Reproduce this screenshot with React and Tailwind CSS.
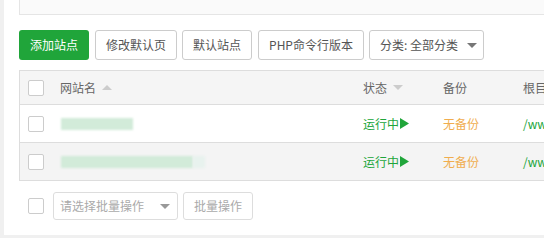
import React from "react";

const font = { fontFamily: '"Noto Sans CJK SC", "Microsoft YaHei", sans-serif' };

function Box() {
  return <div className="w-[16px] h-[16px] border border-[#ccc] rounded-[2px] bg-white" />;
}

function Tri({ up, color = "#ccc", w = 10, h = 5 }) {
  return (
    <svg width={w} height={h} viewBox="0 0 10 5" className="inline-block">
      {up ? <path d="M0 5 L5 0 L10 5 Z" fill={color} /> : <path d="M0 0 L10 0 L5 5 Z" fill={color} />}
    </svg>
  );
}

function Running() {
  return (
    <span className="flex items-center text-[#20a53a]">
      运行中
      <svg width="9" height="11" viewBox="0 0 9 11" className="ml-[1px]">
        <path d="M0 0 L9 5.5 L0 11 Z" fill="#20a53a" />
      </svg>
    </span>
  );
}

function Row({ bg, nameW, extra }) {
  return (
    <div className={`flex h-[38px] border-b border-[#ddd] items-center ${bg}`}>
      <div className="w-[32px] pl-[8px] flex items-center">
        <Box />
      </div>
      <div className="w-[303px] pl-[9px] flex items-center">
        <div className={`h-[12px] ${nameW} bg-[#d2ebd9] blur-[1px]`} />
        {extra && <div className="h-[12px] w-[12px] bg-[#e8f2ee] blur-[1px]" />}
      </div>
      <div className="w-[80px] pl-[8px]"><Running /></div>
      <div className="w-[80px] pl-[8px] text-[#f0ad4e]">无备份</div>
      <div className="pl-[8px] text-[#20a53a] whitespace-nowrap">/www/wwwroot</div>
    </div>
  );
}

export default function App() {
  return (
    <div className="w-[544px] h-[238px] bg-[#f0f0f0] overflow-hidden pl-[4px] text-[12px]" style={font}>
      <div className="h-[235px] bg-white pl-[15px] overflow-hidden">
        <div className="h-[15px] border-l border-b border-[#e5e5e5] bg-[#fafafa]" />
        <div className="flex mt-[15px] h-[30px] gap-[5px] whitespace-nowrap">
          <div className="w-[70px] flex items-center justify-center bg-[#20a53a] text-white rounded-[3px]">添加站点</div>
          <div className="w-[82px] flex items-center justify-center border border-[#ccc] text-[#555] rounded-[3px] ml-[1px]">修改默认页</div>
          <div className="w-[70px] flex items-center justify-center border border-[#ccc] text-[#555] rounded-[3px]">默认站点</div>
          <div className="w-[106px] flex items-center justify-center border border-[#ccc] text-[#555] rounded-[3px] ml-[1px]">PHP命令行版本</div>
          <div className="w-[115px] flex items-center border border-[#ccc] text-[#555] rounded-[3px] pl-[10px] pr-[6px] justify-between">
            <span>分类: 全部分类</span>
            <Tri color="#777" />
          </div>
        </div>
        <div className="mt-[10px] border-l border-t border-[#ddd] w-[600px]">
          <div className="flex h-[34px] bg-[#f5f5f5] border-b border-[#ddd] items-center text-[#666]">
            <div className="w-[32px] pl-[8px] flex items-center"><Box /></div>
            <div className="w-[303px] pl-[8px] flex items-center gap-[6px]">
              <span>网站名</span>
              <Tri up />
            </div>
            <div className="w-[80px] pl-[8px] flex items-center gap-[6px]">
              <span>状态</span>
              <Tri />
            </div>
            <div className="w-[80px] pl-[8px]">备份</div>
            <div className="pl-[8px] whitespace-nowrap">根目录</div>
          </div>
          <Row bg="bg-white" nameW="w-[72px]" />
          <Row bg="bg-[#f4f4f4]" nameW="w-[132px]" extra />
        </div>
        <div className="flex items-center mt-[11px] h-[28px]">
          <div className="ml-[9px]"><Box /></div>
          <div className="ml-[9px] w-[125px] h-[28px] border border-[#ddd] rounded-[3px] flex items-center justify-between pl-[6px] pr-[7px] text-[#aaa]">
            <span>请选择批量操作</span>
            <Tri color="#999" />
          </div>
          <div className="ml-[5px] w-[70px] h-[28px] border border-[#ddd] rounded-[3px] flex items-center justify-center text-[#aaa]">批量操作</div>
        </div>
      </div>
    </div>
  );
}
